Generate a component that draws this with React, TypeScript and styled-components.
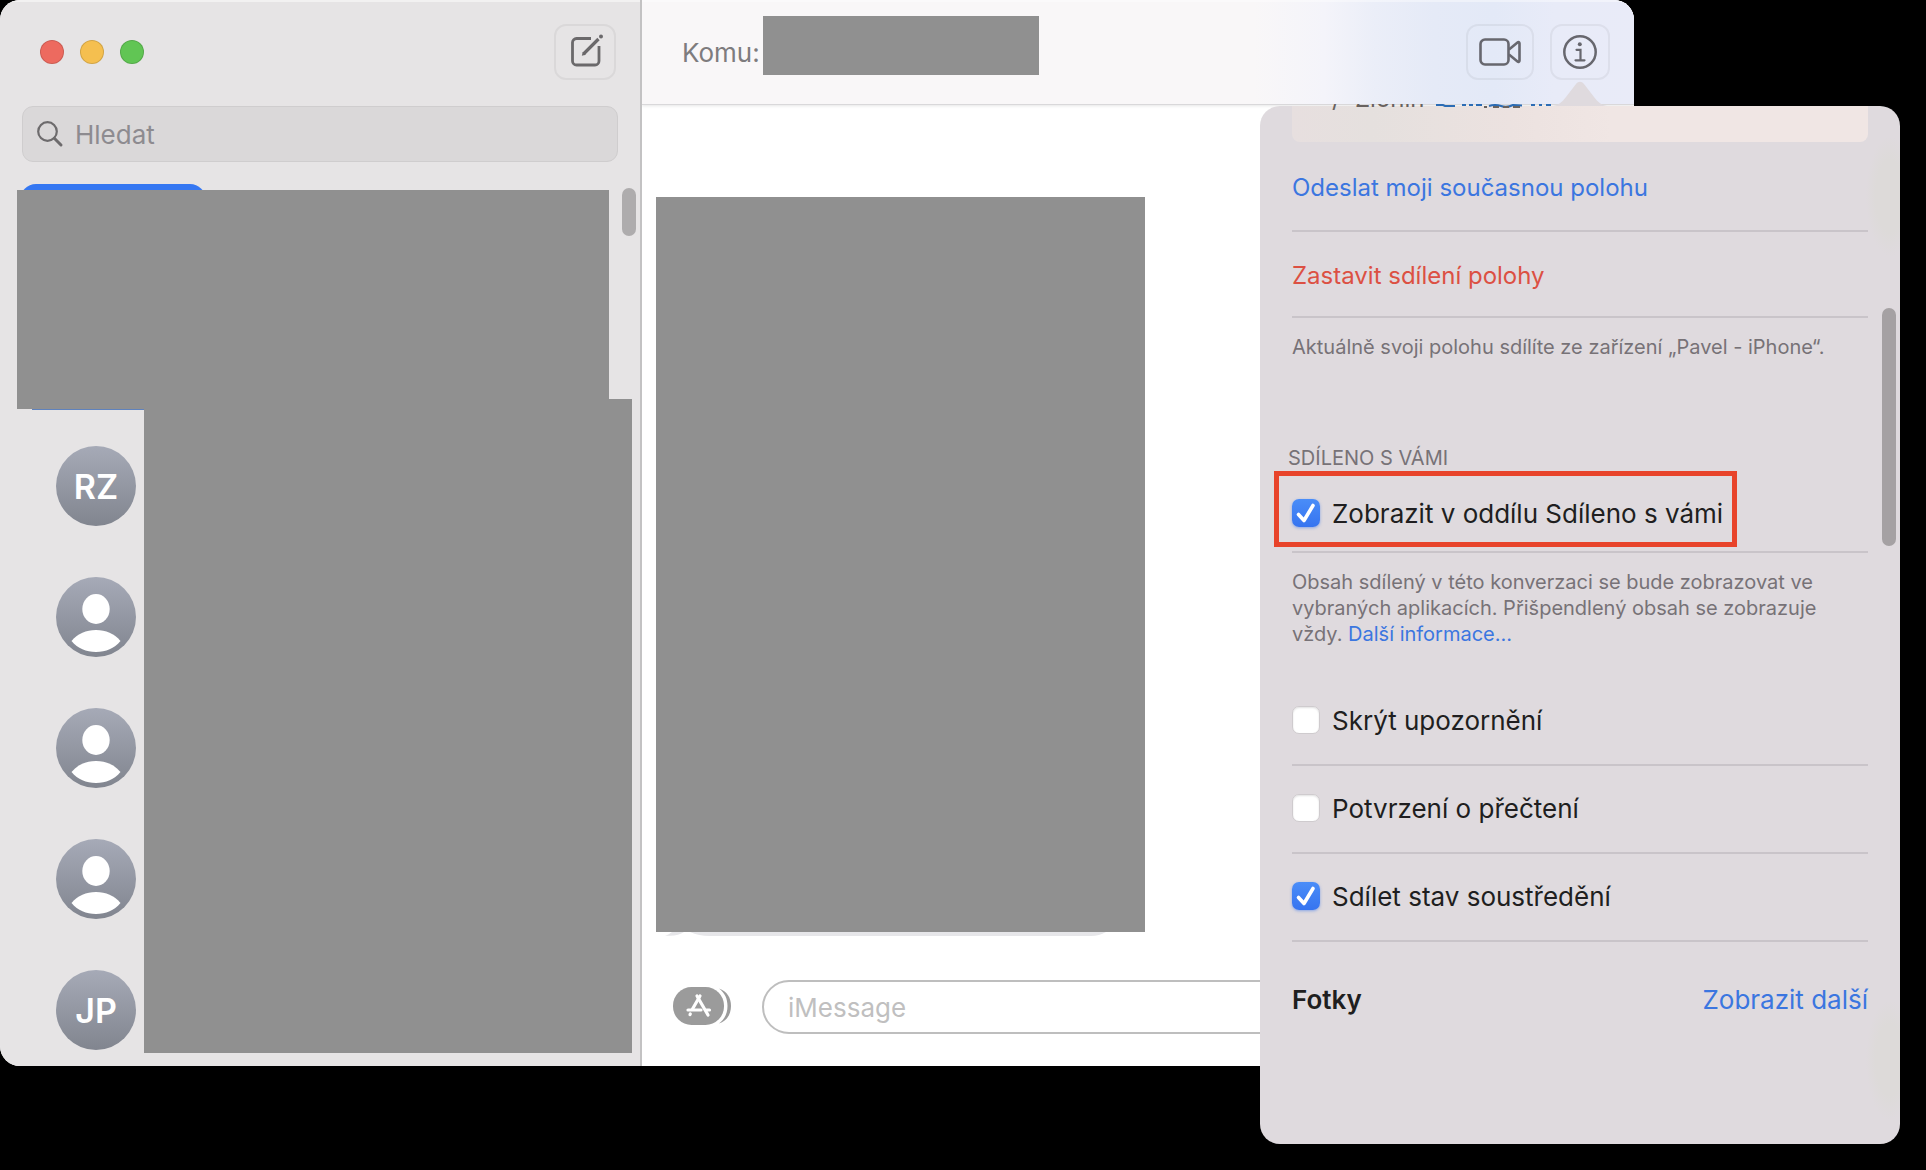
import React, { useState } from "react";
import styled, { createGlobalStyle } from "styled-components";

const GlobalStyle = createGlobalStyle`
  *, *::before, *::after { box-sizing: border-box; }
  body {
    margin: 0;
    background: #000;
    font-family: Inter, "Liberation Sans", sans-serif;
    color: #201e20;
  }
  button, input { font: inherit; margin: 0; }
  p, h2, h3 { margin: 0; font-weight: 400; }
`;

const blue = "#3b76e0";
const hidden = "#909090";

const Desktop = styled.div`
  position: relative;
  min-height: 100vh;
  padding-right: 292px;
  background: #000;
`;

const AppWindow = styled.div`
  display: flex;
  border-radius: 20px;
  overflow: hidden;
  background: #fff;
`;

/* Sidebar */

const Sidebar = styled.aside`
  position: relative;
  flex: 0 0 642px;
  border-right: 2px solid #c3c2c3;
  background: #e6e4e5;
  box-shadow: inset 0 2px 0 #f2f1f1;
  padding-bottom: 13px;
`;

const TitleBar = styled.div`
  display: flex;
  align-items: center;
  justify-content: space-between;
  padding: 24px 24px 0 40px;
`;

const Lights = styled.div`
  display: flex;
  gap: 16px;
`;

const Light = styled.button<{ $color: string }>`
  width: 24px;
  height: 24px;
  padding: 0;
  border: 1px solid rgba(0, 0, 0, 0.14);
  border-radius: 50%;
  background: ${(p) => p.$color};
`;

const ToolButton = styled.button<{ $width: number }>`
  display: flex;
  align-items: center;
  justify-content: center;
  width: ${(p) => p.$width}px;
  height: 56px;
  padding: 0;
  border: 2px solid rgba(0, 0, 0, 0.05);
  border-radius: 12px;
  background: transparent;
  color: #67676e;
`;

const Search = styled.label`
  display: flex;
  align-items: center;
  gap: 11px;
  height: 56px;
  margin: 26px 22px 0;
  padding: 0 13px;
  border: 1px solid #cfcdce;
  border-radius: 11px;
  background: #dad8d9;
`;

const SearchInput = styled.input`
  flex: 1;
  min-width: 0;
  padding: 2px 0 0;
  border: 0;
  outline: 0;
  background: transparent;
  font-size: 26px;
  line-height: 32px;
  &::placeholder { color: #8d8b90; opacity: 1; }
`;

const PinnedClip = styled.div`
  height: 6px;
  margin: 22px 0 0 20px;
  overflow: hidden;
`;

const Pinned = styled.div`
  width: 186px;
  height: 60px;
  border-radius: 16px;
  background: #3577f2;
`;

const PinnedCover = styled.div`
  height: 219px;
  margin: 0 31px 0 17px;
  background: ${hidden};
`;

const SelectionEdge = styled.div`
  width: 112px;
  height: 1px;
  margin-left: 32px;
  background: #5f82bd;
`;

const Conversations = styled.div`
  display: flex;
  gap: 8px;
  margin: 0 8px 0 56px;
`;

const AvatarList = styled.ul`
  display: flex;
  flex-direction: column;
  gap: 51px;
  margin: 0;
  padding: 36px 0 0;
  list-style: none;
`;

const ConversationsCover = styled.div`
  flex: 1;
  margin-top: -11px;
  background: ${hidden};
  min-height: 654px;
`;

const Avatar = styled.li`
  display: flex;
  align-items: center;
  justify-content: center;
  width: 80px;
  height: 80px;
  border-radius: 50%;
  background: linear-gradient(#a6aab7, #81858f);
  color: #fff;
  font-size: 34px;
  line-height: 40px;
  font-weight: 600;
`;

const Initials = styled.span`
  padding-top: 2px;
`;

const SidebarThumb = styled.div`
  position: absolute;
  top: 188px;
  right: 4px;
  width: 14px;
  height: 48px;
  border-radius: 7px;
  background: #aeacad;
`;

/* Chat */

const Chat = styled.main`
  flex: 1;
  min-width: 0;
  display: flex;
  flex-direction: column;
  background: #fff;
`;

const ChatHeader = styled.header`
  display: flex;
  align-items: center;
  gap: 16px;
  height: 105px;
  padding: 0 24px 0 40px;
  border-bottom: 1px solid #d9d8da;
  box-shadow: 0 1px 3px rgba(0, 0, 0, 0.1), inset 0 2px 0 rgba(255, 255, 255, 0.4);
  background: linear-gradient(
    to left,
    #e9ebf8 0,
    #e8ebf8 80px,
    #e3e9f7 140px,
    #e5eaf7 200px,
    #ebeef8 260px,
    #f4f4fa 310px,
    #f9f7f8 380px
  );
`;

const Recipient = styled.div`
  flex: 1;
  display: flex;
  align-items: center;
  gap: 3px;
  color: #7e7c7e;
  font-size: 26px;
  line-height: 32px;
`;

const RecipientLabel = styled.span`
  padding-top: 2px;
`;

const RecipientCover = styled.div`
  width: 276px;
  height: 59px;
  margin-bottom: 13px;
  background: ${hidden};
`;

const Messages = styled.div`
  flex: 1;
  padding: 92px 0 0 14px;
`;

const MessagesCover = styled.div`
  width: 489px;
  height: 735px;
  background: ${hidden};
`;

const BubbleEdge = styled.svg`
  display: block;
  margin-left: 8px;
`;

const Composer = styled.div`
  display: flex;
  align-items: center;
  gap: 31px;
  padding: 0 24px 32px 31px;
`;

const AppsButton = styled.button`
  padding: 0 0 2px;
  border: 0;
  background: none;
  line-height: 0;
`;

const MessageInput = styled.input`
  flex: 1;
  min-width: 0;
  height: 54px;
  padding: 0 24px;
  border: 2px solid #bebebe;
  border-radius: 27px;
  outline: 0;
  background: #fff;
  font-size: 26px;
  &::placeholder { color: #c0bfc0; opacity: 1; }
`;

/* Details popover */

const Popover = styled.section`
  position: absolute;
  top: 106px;
  right: 26px;
  width: 640px;
  padding: 0 32px 128px;
  border-radius: 20px;
  background:
    radial-gradient(24px 60px at 630px 90px, #dddad9 60%, transparent),
    radial-gradient(24px 60px at 630px 954px, #dddad9 60%, transparent),
    #dfdade;
`;

const PopoverArrow = styled.svg`
  position: absolute;
  top: -25px;
  left: 290px;
`;

const PopoverThumb = styled.div`
  position: absolute;
  top: 202px;
  right: 4px;
  width: 14px;
  height: 238px;
  border-radius: 7px;
  background: #a5a1a3;
`;

/* The scrolled map card peeks 2px above the popover's edge; its fill starts at the edge. */
const MapCard = styled.div`
  position: relative;
  display: flex;
  align-items: flex-start;
  height: 38px;
  margin-top: -2px;
  padding-left: 40px;
  border-radius: 0 0 8px 8px;
  overflow: hidden;
  background: linear-gradient(to right, #e7dfdf, #e5e0de 80px, #ece2e0 220px, #f0e6e4 320px) 0 2px no-repeat;
  color: #68625f;
`;

const MapLabel = styled.span<{ $width: number }>`
  flex: 0 0 ${(p) => p.$width}px;
  margin-top: -21px;
  font-size: 24px;
  line-height: 32px;
  white-space: nowrap;
`;

const ActionRow = styled.div<{ $height: number }>`
  display: flex;
  align-items: center;
  height: ${(p) => p.$height}px;
  padding-top: 3px;
  border-bottom: 2px solid #c9c4c9;
`;

const ActionButton = styled.button<{ $color: string }>`
  padding: 0;
  border: 0;
  background: none;
  color: ${(p) => p.$color};
  font-size: 24px;
  line-height: 32px;
`;

const Note = styled.p`
  margin-top: 16px;
  color: #777277;
  font-size: 20px;
  line-height: 26px;
`;

const NoteLink = styled.a`
  color: ${blue};
  text-decoration: none;
`;

const SectionTitle = styled.h2`
  margin: 85px 0 0 -4px;
  color: #777277;
  font-size: 20px;
  line-height: 26px;
`;

const Highlight = styled.div`
  display: flex;
  align-items: center;
  width: fit-content;
  height: 76px;
  margin-left: -18px;
  padding: 8px 9px 0 13px;
  border: 5px solid #e8432a;
`;

const Divider = styled.hr`
  height: 2px;
  margin: 4px 0 0;
  border: 0;
  background: #c9c4c9;
`;

const Options = styled.div`
  margin-top: 31px;
`;

const OptionRow = styled.div`
  display: flex;
  align-items: center;
  height: 88px;
  padding-bottom: 2px;
  border-bottom: 2px solid #c9c4c9;
`;

const OptionLabel = styled.label`
  display: flex;
  align-items: center;
  gap: 12px;
  font-size: 26px;
  line-height: 32px;
  white-space: nowrap;
`;

const OptionText = styled.span`
  padding-top: 2px;
`;

const Box = styled.span`
  position: relative;
  display: flex;
  width: 28px;
  height: 28px;
`;

const BoxInput = styled.input`
  appearance: none;
  width: 28px;
  height: 28px;
  border: 1px solid #cfcbce;
  border-radius: 7px;
  background: #fff;
  box-shadow: inset 0 1px 2px rgba(0, 0, 0, 0.12);
  &:checked {
    border: 0;
    background: linear-gradient(#4a8df8, #3674f0);
    box-shadow: 0 1px 3px rgba(54, 116, 240, 0.5);
  }
`;

const Tick = styled.svg`
  position: absolute;
  inset: 0;
  pointer-events: none;
`;

const PhotosHeader = styled.div`
  display: flex;
  align-items: center;
  justify-content: space-between;
  margin-top: 42px;
  font-size: 26px;
  line-height: 32px;
`;

const PhotosTitle = styled.h3`
  font-size: 26px;
  font-weight: 600;
`;

const MoreLink = styled.a`
  color: ${blue};
  text-decoration: none;
`;

function PersonIcon() {
  return (
    <svg width="80" height="80" viewBox="0 0 80 80" fill="#fff" aria-hidden="true">
      <ellipse cx="40" cy="32" rx="13.7" ry="15" />
      <path d="M15.5 64C22 56.5 30 53 40 53s18 3.5 24.5 11C58 71.5 50 75 40 75s-18-3.5-24.5-11z" />
    </svg>
  );
}

function ComposeIcon() {
  return (
    <svg width="36" height="36" viewBox="-1 1 36 36" overflow="visible" fill="none" stroke="#6b696b" aria-hidden="true">
      <path
        d="M23 5.5H8.500a4 4 0 0 0-4 4v18.500a4 4 0 0 0 4 4H27a4 4 0 0 0 4-4V13"
        strokeWidth="2.800"
      />
      <path d="M15.5 21 30.5 6" strokeWidth="3.200" />
      <path d="M13.8 22.8l1-3.800 3 2.800z" fill="#6b696b" stroke="none" />
      <circle cx="33" cy="3.500" r="2" fill="#6b696b" stroke="none" />
    </svg>
  );
}

function SearchIcon() {
  return (
    <svg width="28" height="28" viewBox="0 0 28 28" fill="none" stroke="#6d6b6d" aria-hidden="true">
      <circle cx="11.5" cy="11.5" r="9.300" strokeWidth="2.200" />
      <path d="m18.3 18.3 6.700 6.700" strokeWidth="3" strokeLinecap="round" />
    </svg>
  );
}

function VideoIcon() {
  return (
    <svg width="42" height="28" viewBox="0 0 42 28" fill="none" stroke="currentColor" strokeWidth="2.600" strokeLinejoin="round" aria-hidden="true">
      <rect x="1.500" y="1.500" width="28" height="25" rx="4.500" />
      <path d="M30 11.5 38.5 4.500c1-.8 2-.4 2 1v17c0 1.400-1 1.800-2 1l-8.500-7" />
    </svg>
  );
}

function InfoIcon() {
  return (
    <svg width="34" height="34" viewBox="0 0 34 34" fill="none" stroke="currentColor" aria-hidden="true">
      <circle cx="17" cy="17" r="15.700" strokeWidth="2.500" />
      <circle cx="16.800" cy="9.300" r="2" fill="currentColor" stroke="none" />
      <path d="M13.5 14.8h4v10.500M12.5 25.300h9" strokeWidth="2.200" strokeLinecap="round" />
    </svg>
  );
}

function AppsIcon() {
  return (
    <svg width="58" height="38" viewBox="0 0 58 38" fill="none" aria-hidden="true">
      <rect width="51" height="38" rx="18.500" fill="#9b9b9b" />
      <path d="M46 1.500C54 4 58 11 58 19s-4 15-12 17.500C52 32 54.500 26 54.500 19S52 6 46 1.500z" fill="#9b9b9b" />
      <g stroke="#fff" strokeWidth="3.200" strokeLinecap="round">
        <path d="M27 9 19.500 22" />
        <path d="M24 9l11 19" />
        <path d="M15 23h13M33.500 23h3" />
        <path d="M17.300 27l-.3 .6" />
      </g>
    </svg>
  );
}

function Option({ label, initial }: { label: string; initial: boolean }) {
  const [on, setOn] = useState(initial);
  return (
    <OptionLabel>
      <Box>
        <BoxInput type="checkbox" checked={on} onChange={(e) => setOn(e.target.checked)} />
        {on && (
          <Tick width="28" height="28" viewBox="0 0 28 28" fill="none" stroke="#fff" strokeWidth="3.600" strokeLinecap="round" strokeLinejoin="round">
            <path d="m6.500 15.500 5.500 6L21 6.500" />
          </Tick>
        )}
      </Box>
      <OptionText>{label}</OptionText>
    </OptionLabel>
  );
}

const people = ["RZ", null, null, null, "JP"];

export default function App() {
  return (
    <>
      <GlobalStyle />
      <Desktop>
        <AppWindow>
          <Sidebar>
            <TitleBar>
              <Lights>
                <Light $color="#ed6a5f" aria-label="Zavřít" />
                <Light $color="#f5bf4f" aria-label="Minimalizovat" />
                <Light $color="#61c554" aria-label="Zvětšit" />
              </Lights>
              <ToolButton $width={62} aria-label="Nová zpráva">
                <ComposeIcon />
              </ToolButton>
            </TitleBar>
            <Search>
              <SearchIcon />
              <SearchInput type="text" placeholder="Hledat" aria-label="Hledat" />
            </Search>
            <PinnedClip>
              <Pinned />
            </PinnedClip>
            <PinnedCover />
            <SelectionEdge />
            <Conversations>
              <AvatarList>
                {people.map((initials, i) => (
                  <Avatar key={i}>{initials ? <Initials>{initials}</Initials> : <PersonIcon />}</Avatar>
                ))}
              </AvatarList>
              <ConversationsCover />
            </Conversations>
            <SidebarThumb />
          </Sidebar>

          <Chat>
            <ChatHeader>
              <Recipient>
                <RecipientLabel>Komu:</RecipientLabel>
                <RecipientCover />
              </Recipient>
              <ToolButton $width={68} aria-label="Videohovor">
                <VideoIcon />
              </ToolButton>
              <ToolButton $width={60} aria-label="Podrobnosti">
                <InfoIcon />
              </ToolButton>
            </ChatHeader>
            <Messages>
              <MessagesCover />
              <BubbleEdge width="446" height="4" viewBox="0 0 446 4" fill="#e6e6e9" aria-hidden="true">
                <path d="M8 0h12C16 3 9 4.500 1 3.500 4 3 6 1.500 8 0zM26 0h416c-5 2.500-9 4-15 4H46C38 4 32 2.500 26 0z" />
              </BubbleEdge>
            </Messages>
            <Composer>
              <AppsButton aria-label="Aplikace">
                <AppsIcon />
              </AppsButton>
              <MessageInput type="text" placeholder="iMessage" aria-label="iMessage" />
            </Composer>
          </Chat>
        </AppWindow>

        <Popover aria-label="Podrobnosti konverzace">
          <PopoverArrow width="60" height="25" viewBox="0 0 60 25" fill="#dfdade" aria-hidden="true">
            <path d="M3 25c6-1 9-4 13-9L26 3c2.500-3 5.500-3 8 0l10 13c4 5 7 8 13 9z" />
          </PopoverArrow>
          <MapCard>
            <MapLabel $width={23}>/</MapLabel>
            <MapLabel $width={80}>Zlonín</MapLabel>
            <svg width="120" height="4" viewBox="0 0 120 4" fill="none" stroke="#2b6cb5" strokeWidth="2" aria-hidden="true">
              <path d="M1 1h7l2 1h10M27 1h4M34 1h4M41 1h6M54 2q6-2 12 0t12-1l9 .5M96 1h4M104 1h3M111 1h5" />
              <path d="M49 3h3M58 3h6M68 3h6M78 3h7" stroke="#68625f" />
            </svg>
          </MapCard>
          <ActionRow $height={90}>
            <ActionButton $color={blue}>Odeslat moji současnou polohu</ActionButton>
          </ActionRow>
          <ActionRow $height={86}>
            <ActionButton $color="#dc5043">Zastavit sdílení polohy</ActionButton>
          </ActionRow>
          <Note>Aktuálně svoji polohu sdílíte ze zařízení „Pavel - iPhone“.</Note>

          <SectionTitle>SDÍLENO S VÁMI</SectionTitle>
          <Highlight>
            <Option label="Zobrazit v oddílu Sdíleno s vámi" initial={true} />
          </Highlight>
          <Divider />
          <Note>
            Obsah sdílený v této konverzaci se bude zobrazovat ve vybraných aplikacích. Přišpendlený
            obsah se zobrazuje vždy. <NoteLink href="#dalsi-informace">Další informace…</NoteLink>
          </Note>

          <Options>
            <OptionRow>
              <Option label="Skrýt upozornění" initial={false} />
            </OptionRow>
            <OptionRow>
              <Option label="Potvrzení o přečtení" initial={false} />
            </OptionRow>
            <OptionRow>
              <Option label="Sdílet stav soustředění" initial={true} />
            </OptionRow>
          </Options>

          <PhotosHeader>
            <PhotosTitle>Fotky</PhotosTitle>
            <MoreLink href="#fotky">Zobrazit další</MoreLink>
          </PhotosHeader>
          <PopoverThumb />
        </Popover>
      </Desktop>
    </>
  );
}
